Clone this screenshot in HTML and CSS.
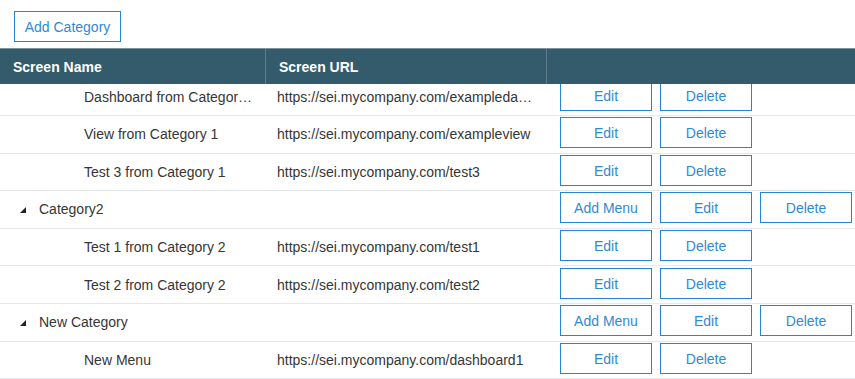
FILE: index.html
```html
<!DOCTYPE html>
<html lang="en">
<head>
    <meta charset="UTF-8">
    <title>Menu Configuration</title>
    <link rel="stylesheet" href="styles.css">
</head>
<body>
    <div class="toolbar">
        <button type="button" class="btn btn-toolbar">Add Category</button>
    </div>

    <div class="grid">
        <div class="grid-header">
            <div class="th">Screen Name</div>
            <div class="th">Screen URL</div>
            <div class="th"></div>
        </div>

        <div class="grid-body">
            <div class="rows">
                <div class="row child">
                    <div class="cell name">Dashboard from Category 1</div>
                    <div class="cell url">https://sei.mycompany.com/exampledashboard</div>
                    <div class="cell actions">
                        <button type="button" class="btn">Edit</button>
                        <button type="button" class="btn">Delete</button>
                    </div>
                </div>
                <div class="row child">
                    <div class="cell name">View from Category 1</div>
                    <div class="cell url">https://sei.mycompany.com/exampleview</div>
                    <div class="cell actions">
                        <button type="button" class="btn">Edit</button>
                        <button type="button" class="btn">Delete</button>
                    </div>
                </div>
                <div class="row child">
                    <div class="cell name">Test 3 from Category 1</div>
                    <div class="cell url">https://sei.mycompany.com/test3</div>
                    <div class="cell actions">
                        <button type="button" class="btn">Edit</button>
                        <button type="button" class="btn">Delete</button>
                    </div>
                </div>
                <div class="row category">
                    <div class="cell name">
                        <svg class="toggle" width="6" height="6" viewBox="0 0 6 6"><polygon points="6,0 6,6 0,6"/></svg>
                        <span>Category2</span>
                    </div>
                    <div class="cell url"></div>
                    <div class="cell actions">
                        <button type="button" class="btn">Add Menu</button>
                        <button type="button" class="btn">Edit</button>
                        <button type="button" class="btn">Delete</button>
                    </div>
                </div>
                <div class="row child">
                    <div class="cell name">Test 1 from Category 2</div>
                    <div class="cell url">https://sei.mycompany.com/test1</div>
                    <div class="cell actions">
                        <button type="button" class="btn">Edit</button>
                        <button type="button" class="btn">Delete</button>
                    </div>
                </div>
                <div class="row child">
                    <div class="cell name">Test 2 from Category 2</div>
                    <div class="cell url">https://sei.mycompany.com/test2</div>
                    <div class="cell actions">
                        <button type="button" class="btn">Edit</button>
                        <button type="button" class="btn">Delete</button>
                    </div>
                </div>
                <div class="row category">
                    <div class="cell name">
                        <svg class="toggle" width="6" height="6" viewBox="0 0 6 6"><polygon points="6,0 6,6 0,6"/></svg>
                        <span>New Category</span>
                    </div>
                    <div class="cell url"></div>
                    <div class="cell actions">
                        <button type="button" class="btn">Add Menu</button>
                        <button type="button" class="btn">Edit</button>
                        <button type="button" class="btn">Delete</button>
                    </div>
                </div>
                <div class="row child">
                    <div class="cell name">New Menu</div>
                    <div class="cell url">https://sei.mycompany.com/dashboard1</div>
                    <div class="cell actions">
                        <button type="button" class="btn">Edit</button>
                        <button type="button" class="btn">Delete</button>
                    </div>
                </div>
            </div>
        </div>
    </div>
</body>
</html>
```

FILE: styles.css
```css
:root {
    --header-bg: #345b6b;
    --header-line: #5d7d8a;
    --blue: #2585d3;
    --blue-text: #2f8ad6;
    --row-line: #e5e8eb;
    --text-dark: #363636;
}

* {
    box-sizing: border-box;
    margin: 0;
    padding: 0;
}

body {
    font-family: 'Liberation Sans', Arial, sans-serif;
    font-size: 14px;
    color: var(--text-dark);
    background-color: white;
    height: 379px;
    overflow: hidden;
}

.toolbar {
    padding: 11px 14px 6px;
}

.btn {
    font-family: inherit;
    font-size: 14px;
    color: var(--blue-text);
    background-color: white;
    border: 1px solid var(--blue);
    height: 31px;
    width: 92px;
    padding-top: 1px;
    cursor: pointer;
}

.btn-toolbar {
    width: 107px;
}

.grid-header {
    display: grid;
    grid-template-columns: 266px 281px 1fr;
    height: 36px;
    background-color: var(--header-bg);
    border-top: 1px solid #7d949e;
}

.th {
    color: white;
    font-weight: 700;
    padding: 10px 13px 0;
    border-right: 1px solid var(--header-line);
}

.th:last-child {
    border-right: none;
}

.grid-body {
    height: 295px;
    overflow: hidden;
}

.rows {
    margin-top: -5.6px;
}

.row {
    display: grid;
    grid-template-columns: 266px 281px 1fr;
    align-items: center;
    height: 37.6px;
    border-bottom: 1px solid var(--row-line);
}

.cell {
    white-space: nowrap;
    overflow: hidden;
    text-overflow: ellipsis;
}

.child .name {
    padding: 0 12px 0 84px;
}

.category .name {
    display: flex;
    align-items: center;
    padding-left: 20px;
}

.toggle {
    fill: #222;
    margin-right: 13px;
    margin-top: 2px;
}

.url {
    padding: 0 13px 0 11px;
}

.actions {
    display: flex;
    gap: 8px;
    padding-left: 13px;
    margin-top: -3px;
    overflow: visible;
}
```
